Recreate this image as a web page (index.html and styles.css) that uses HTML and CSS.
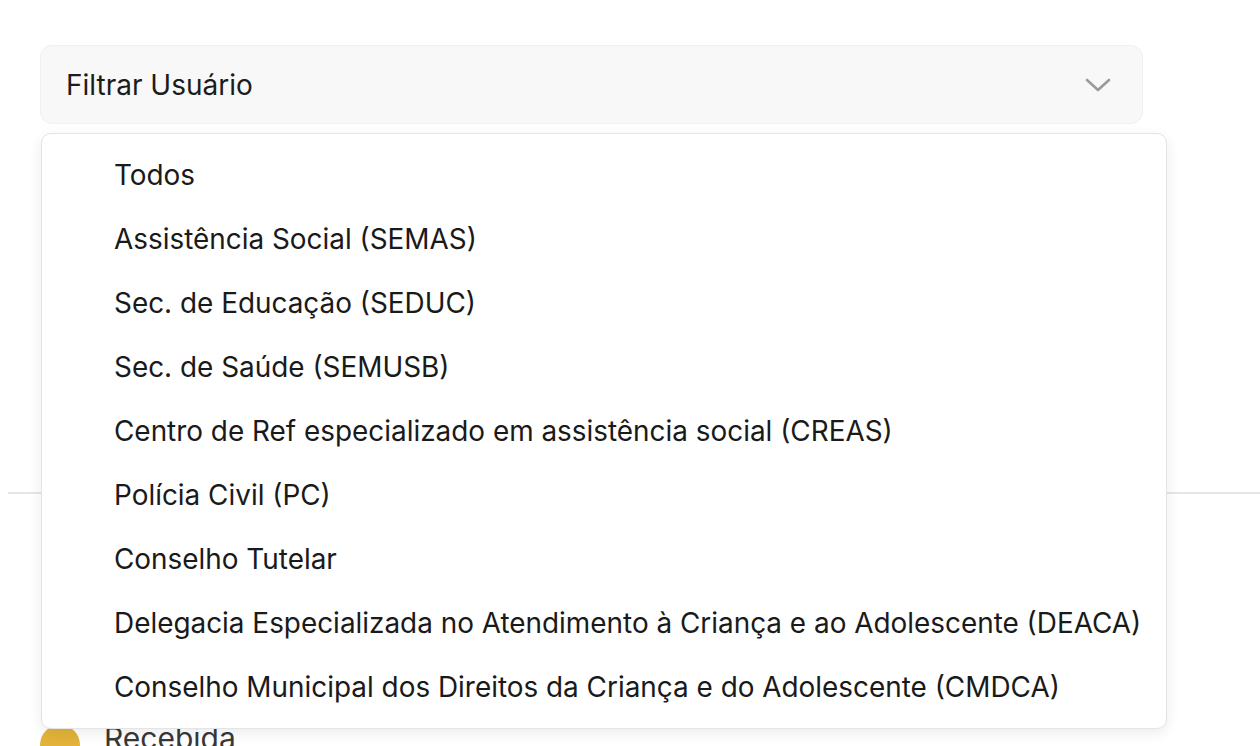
FILE: index.html
```html
<!DOCTYPE html>
<html lang="pt-BR">
<head>
    <meta charset="UTF-8">
    <meta name="viewport" content="width=device-width, initial-scale=1.0">
    <title>Filtrar Usuário</title>
    <link rel="stylesheet" href="styles.css">
</head>
<body>
    <div class="page">
        <div class="filters">
            <div class="select-wrap">
                <div class="select">
                    <span>Filtrar Usuário</span>
                    <svg class="chevron" width="26" height="16" viewBox="0 0 26 16">
                        <path d="M2 3 L13 13 L24 3" fill="none" stroke="#9a9a9a" stroke-width="2.6" stroke-linecap="round" stroke-linejoin="round"/>
                    </svg>
                </div>

                <ul class="menu">
                    <li>Todos</li>
                    <li>Assistência Social (SEMAS)</li>
                    <li>Sec. de Educação (SEDUC)</li>
                    <li>Sec. de Saúde (SEMUSB)</li>
                    <li>Centro de Ref especializado em assistência social (CREAS)</li>
                    <li>Polícia Civil (PC)</li>
                    <li>Conselho Tutelar</li>
                    <li>Delegacia Especializada no Atendimento à Criança e ao Adolescente (DEACA)</li>
                    <li>Conselho Municipal dos Direitos da Criança e do Adolescente (CMDCA)</li>
                </ul>
            </div>
        </div>

        <hr class="divider">

        <div class="legend">
            <div class="legend-item">
                <span class="dot dot-yellow"></span>
                <span>Recebida</span>
            </div>
        </div>
    </div>
</body>
</html>
```

FILE: styles.css
```css
body {
    margin: 0;
    font-family: Inter, "Noto Sans", Arial, sans-serif;
    background-color: #fff;
    color: #1a1a1a;
}
.page {
    padding-left: 8px;
}
.filters {
    padding: 45px 117px 0 32px;
    height: 447px;
}
.select-wrap {
    position: relative;
}
.select {
    display: flex;
    align-items: center;
    justify-content: space-between;
    height: 77px;
    padding: 0 31px 0 25px;
    background-color: #f8f8f8;
    border: 1px solid #f0f0f0;
    border-radius: 12px;
    font-size: 28px;
    color: #1c1c1c;
}
.chevron {
    display: block;
}
.menu {
    position: absolute;
    top: 88px;
    left: 1px;
    width: 1124px;
    margin: 0;
    padding: 9px 0;
    list-style: none;
    background-color: #fff;
    border: 1px solid #e4e4e4;
    border-radius: 10px;
    box-shadow: 0 4px 14px rgba(0,0,0,0.08);
    z-index: 2;
}
.menu li {
    height: 64px;
    display: flex;
    align-items: center;
    padding-left: 72px;
    font-size: 27.9px;
    color: #1a1a1a;
    white-space: nowrap;
}
.divider {
    margin: 0;
    border: 0;
    border-top: 2px solid #e6e6e6;
}
.legend {
    padding: 231px 32px 0;
}
.legend-item {
    display: flex;
    align-items: flex-start;
    gap: 24px;
    font-size: 30px;
    line-height: 26px;
    color: #383838;
}
.dot {
    width: 40px;
    height: 40px;
    border-radius: 50%;
}
.dot-yellow {
    background-color: #e2b23a;
}
```
